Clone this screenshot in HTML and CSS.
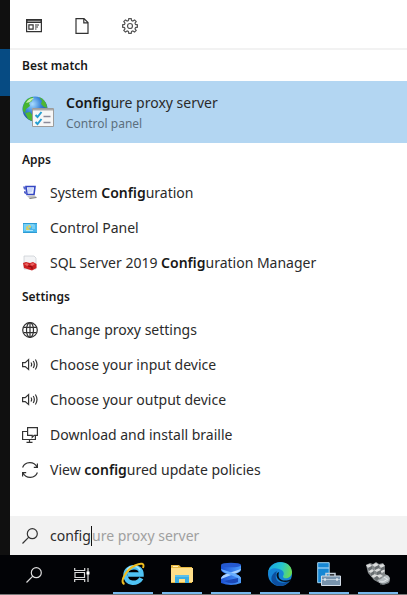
FILE: index.html
```html
<!DOCTYPE html>
<html lang="en">
<head>
<meta charset="utf-8">
<meta name="viewport" content="width=device-width, initial-scale=1">
<title>Search</title>
<link rel="stylesheet" href="styles.css">
</head>
<body>
<div class="screen">
  <div class="workspace">
    <div class="desktop-edge"><div class="edge-selection"></div></div>
    <main class="panel">
      <nav class="filters">
        <button class="filter" aria-label="Apps">
          <svg class="icon" viewBox="0 0 16 16"><path d="M.6 1.6h14.800v12H.6z" fill="none"/><path d="M1 2.200h14v2.200H1z" fill="#bbb"/><path d="M2.900 6.900h4.200v4.200H2.900zM9 7h4M9 9h3M9 11h1.500" fill="none"/></svg>
        </button>
        <button class="filter" aria-label="Documents">
          <svg class="icon" viewBox="0 0 16 16"><path d="M2 .6h8l4 4v10.800H2zM9.800.6v4.200H14" fill="none"/></svg>
        </button>
        <button class="filter" aria-label="Settings">
          <svg class="icon gear" viewBox="0 0 16 16"><path d="M6.800.6h2.400l.4 2 1.200.5 1.800-1.200 1.600 1.600L13 5.200l.5 1.200 1.900.4v2.400l-1.900.4-.5 1.200 1.200 1.700-1.600 1.600-1.800-1.200-1.200.5-.4 2H6.800l-.4-2-1.200-.5-1.800 1.200-1.600-1.600L3 10.800l-.5-1.200-1.900-.4V6.800l1.900-.4L3 5.200 1.800 3.500l1.600-1.600 1.800 1.200 1.200-.5z" fill="none"/><circle cx="8" cy="8" r="2.500" fill="none"/></svg>
        </button>
      </nav>

      <h2 class="heading heading-first">Best match</h2>
      <a class="best" href="#">
        <svg class="best-icon" viewBox="0 0 32 32">
          <defs><radialGradient id="globe" cx=".4" cy=".3" r=".75"><stop offset="0" stop-color="#a9dcff"/><stop offset=".45" stop-color="#3b86da"/><stop offset="1" stop-color="#123a91"/></radialGradient></defs>
          <circle cx="13" cy="13" r="12.500" fill="url(#globe)"/>
          <path d="M2 8C4 3 8 1 11 1l-1 4-3 2 1 3-4 3-1 4-2-2c-.5-3 0-5 1-7z" fill="#46b52f"/>
          <path d="M17 1c5 2 8 6 8 11l-3-1-3-3 1-3zM3 17l5-1 3 4-1 5-4-2z" fill="#4eb634"/>
          <path d="M4 7c2-4 5-5 8-5L8 6z" fill="#c8efab"/>
          <path d="M10.500 12.500h21v18h-21z" fill="#f7f7f7" stroke="#9c9c9c"/>
          <path d="M11 13h20v1.500H11z" fill="#aaa"/>
          <path d="M13.500 19l2 2 4-5M13.500 26l2 2 4-5" fill="none" stroke="#249ed2" stroke-width="2"/>
          <path d="M21.500 20.500h7M21.500 26.500h7" stroke="#8b8b9b" stroke-width="1.500"/>
        </svg>
        <span class="best-text"><span class="best-title"><b>Config</b>ure proxy server</span><span class="best-sub">Control panel</span></span>
      </a>

      <h2 class="heading">Apps</h2>
      <ul class="results">
        <li><a class="result" href="#">
          <svg class="icon art" viewBox="0 0 16 16"><path d="M4 1.500h9l-1 8H5z" fill="#eef3ff" stroke="#3547c4" stroke-width="1.600"/><path d="M6 3h5l-1 4-4 1z" fill="#cbd8fa"/><path d="M1 1.500h3v3H2zM2 6l3 1v3L2 8z" fill="#5564cb"/><path d="M5 11l7-1 2.500 2-7 1.500z" fill="#c3c3c3"/><path d="M7.500 13.500l7-1" stroke="#777"/></svg>
          <span>System <b>Config</b>uration</span></a></li>
        <li><a class="result" href="#">
          <svg class="icon art" viewBox="0 0 16 16"><path d="M1 3h14v10H1z" fill="#4ab8ec"/><path d="M1 3h14v1H1zM1 12h14v1H1z" fill="#2e9bd3"/><path d="M2 4h11L3 11H2z" fill="#79d0f5"/><path d="M4 8a2 2 0 012-2v2l2 1a2 2 0 01-4-1z" fill="#d9cd62"/><path d="M6.500 5A2.500 2.500 0 019 7.500H6.500z" fill="#f5d34b"/><path d="M10 6h3M10 8h3M4 10.500h7" stroke="#a8e4fa"/></svg>
          <span>Control Panel</span></a></li>
        <li><a class="result" href="#">
          <svg class="icon art" viewBox="0 0 16 16"><path d="M2 1h10l2 2v11H2z" fill="#f3f4f6" stroke="#ccd0d6" stroke-width=".8"/><path d="M1 8l3-1 4 1 3-1 3.500 2v4L10 15.500 2 13z" fill="#cc2023"/><path d="M2 9l3-1 2 2-2 1zM8 9l3-1 2 1-3 2z" fill="#ea6462"/><path d="M6 11l4 1v2" fill="none" stroke="#8c0d12"/></svg>
          <span>SQL Server 2019 <b>Config</b>uration Manager</span></a></li>
      </ul>

      <h2 class="heading">Settings</h2>
      <ul class="results">
        <li><a class="result" href="#">
          <svg class="icon" viewBox="0 0 16 16"><g fill="none"><circle cx="8" cy="8" r="7.300"/><ellipse cx="8" cy="8" rx="3.500" ry="7.300"/><path d="M1.500 5.300h13M1.500 10.700h13M8 .7v14.600"/></g></svg>
          <span>Change proxy settings</span></a></li>
        <li><a class="result" href="#">
          <svg class="icon" viewBox="0 0 16 16"><path d="M.6 5.600h2.600L6.600 2.500v10L3.200 9.600H.6zM9 5.500q1.300 2 0 4M11.200 4q2.300 3.500 0 7M13.400 2.500q3.200 5 0 10" fill="none"/></svg>
          <span>Choose your input device</span></a></li>
        <li><a class="result" href="#">
          <svg class="icon" viewBox="0 0 16 16"><path d="M.6 5.600h2.600L6.600 2.500v10L3.200 9.600H.6zM9 5.500q1.300 2 0 4M11.200 4q2.300 3.500 0 7M13.400 2.500q3.200 5 0 10" fill="none"/></svg>
          <span>Choose your output device</span></a></li>
        <li><a class="result" href="#">
          <svg class="icon" viewBox="0 0 16 16"><path d="M5.600.7h9.800v7.600h-3.200l-2 2V8.300H5.600zM5.600 4.500H.6v8h12.800V8.500M7.500 12.500v2.800M4.500 15.300h6" fill="none"/></svg>
          <span>Download and install braille</span></a></li>
        <li><a class="result" href="#">
          <svg class="icon" viewBox="0 0 16 16"><path d="M.6 5.500C3-.8 12-1 15 5M15.400 1.500v3.800h-3.600M15.400 10.500C13 16.800 4 17 1 11M.6 14.500v-3.800h3.600" fill="none"/></svg>
          <span>View <b>config</b>ured update policies</span></a></li>
      </ul>

      <div class="search">
        <svg class="icon" viewBox="0 0 16 16"><circle cx="10.300" cy="5.700" r="5" fill="none"/><path d="M6.800 9.200L.5 15.500"/></svg>
        <div class="field">
          <input class="query" type="text" value="config" aria-label="Search">
          <span class="caret"></span>
          <span class="ghost">ure proxy server</span>
        </div>
      </div>
    </main>
  </div>

  <footer class="taskbar">
    <button class="tool" aria-label="Search">
      <svg class="icon light" viewBox="0 0 16 16"><circle cx="10.300" cy="5.700" r="5" fill="none"/><path d="M6.800 9.200L.5 15.500"/></svg>
    </button>
    <button class="tool" aria-label="Task View">
      <svg class="icon light" viewBox="0 0 16 16"><path d="M.7 1v2.500h10V1M1 5.500h9.500v5H1zM.7 15v-2.500h10V15M14 1v14" fill="none"/><path d="M12.500 4.500h3v3h-3z" fill="#fff" stroke="none"/></svg>
    </button>
    <div class="running">
      <button class="app" aria-label="Internet Explorer">
        <svg class="app-icon" viewBox="0 0 24 24"><path d="M20.300 16.200C17 22.500 5 23 4.500 13 4.500 3.500 20.500 2 20.500 12.500H7" fill="none" stroke="#4fc3f3" stroke-width="4.500"/><path d="M6 8C9 3 16 3 19 8" fill="none" stroke="#a9eaff" stroke-width="1.500"/><path d="M3.500 22C-2 20 5 8 14 3.500 20 .5 24 1 22 6" fill="none" stroke="#efbd20" stroke-width="2"/></svg>
      </button>
      <button class="app" aria-label="File Explorer">
        <svg class="app-icon" viewBox="0 0 24 24"><path d="M1 3h8l2 2h11v16H1z" fill="#e8b942"/><path d="M1 6h22v14H1z" fill="#ffe08a"/><path d="M3 4.500h5" stroke="#fff0bd"/><path d="M5 21v-8h14v8h-4v-4H9v4z" fill="#39aee4"/><path d="M5 13h14v2H5z" fill="#5abfea"/></svg>
      </button>
      <button class="app" aria-label="Azure Data Studio">
        <svg class="app-icon" viewBox="0 0 24 24"><defs><linearGradient id="ribbon"><stop offset="0" stop-color="#1c51d2"/><stop offset="1" stop-color="#4c9dfc"/></linearGradient></defs><path d="M2 3q10 4 20 0v5q-1 3-7 4 6 1 7 4v5q-10 4-20 0v-5q1-3 7-4-6-1-7-4z" fill="url(#ribbon)"/><ellipse cx="12" cy="3" rx="10" ry="2.300" fill="#2559cf"/><path d="M22 7q-1 3-7 5L2 17q0-3 5-5z" fill="#a9d2ff"/><path d="M2 7q1 3 7 5l13 5q0-3-5-5z" fill="#67aeff"/><path d="M5 19l14-3v4q-7 3-14-1z" fill="#1b48b8"/></svg>
      </button>
      <button class="app" aria-label="Microsoft Edge">
        <svg class="app-icon" viewBox="0 0 24 24"><defs><linearGradient id="wave" x1="0" y1=".3" x2="1" y2=".5"><stop offset="0" stop-color="#18a5e2"/><stop offset=".55" stop-color="#27c6cb"/><stop offset="1" stop-color="#6ddb50"/></linearGradient></defs><circle cx="12" cy="12" r="12" fill="#1685d7"/><path d="M0 11C1-2 23-4 24 10c0 7-10 8-9 4 2-3 0-6-4-7C6 5 1 7 0 11z" fill="url(#wave)"/><path d="M8 12c-2 9 8 11 14 6-4 7-13 8-17 3C2 17 3 12 9 9z" fill="#0d4f9f"/><path d="M11 10c-2 7 3 10 10 8l2-1-1 2c-4 2-10 1-12-2s-2-6 1-7z" fill="#05101d"/></svg>
      </button>
      <button class="app" aria-label="Server Manager">
        <svg class="app-icon" viewBox="0 0 24 24"><path d="M.7.7h11.500v20H.7z" fill="#1687d4" stroke="#a3d6f3"/><path d="M1 6h11" stroke="#c2e7ff"/><path d="M9 14v-2.500h9V14" fill="none" stroke="#c5d1dc" stroke-width="1.500"/><path d="M4.500 14h19v9.500h-19z" fill="#7894ad" stroke="#d2dce6"/><path d="M5 17.500h18" stroke="#b9cbd9"/><path d="M8 16v3M20 16v3" stroke="#fff"/></svg>
      </button>
      <button class="app" aria-label="Configuration Tools">
        <svg class="app-icon" viewBox="0 0 24 24"><path d="M0 3l4-2 3 1 3-2 3 2 4-1 2 3v8l4 2 1 4-1 3-6 2-9-5-6-7z" fill="#858a8c"/><path d="M0 3l4-1 2 2-4 2zM6 3l4-2 3 2-4 2zM13 3l4-1 2 2-4 2zM2 9l4-2 2 2-3 2zM8 8l4-2 3 2-4 2zM14 9l3-2 2 2-3 2zM5 14l4-2 2 2-3 2zM10 13l4-1 3 2-4 2z" fill="#dcdddd"/><path d="M2 6l4-2v3L3 9zM9 5l4-2v3l-4 2zM15 6l4-2v3l-4 2zM5 11l3-2v3l-3 2zM11 10l4-2v4l-4 1zM8 16l3-2 2 2-2 3z" fill="#686d70"/><path d="M11 18q4 0 6-3l4-2 3 3-2 4-5 2z" fill="#b8bfc2"/><path d="M13 20q4 1 9-3M18 15l3 2" fill="none" stroke="#e5e9eb"/><path d="M14 22q5 1 9-2" fill="none" stroke="#697276"/></svg>
      </button>
    </div>
  </footer>
</div>
</body>
</html>
```
FILE: styles.css
```css
* { box-sizing: border-box; }

body {
  margin: 0;
  background: #fff;
  color: #2b2b2b;
  font-family: "Segoe UI", "Noto Sans", "Open Sans", sans-serif;
  font-size: 14px;
  line-height: 20px;
}

button, input { font: inherit; color: inherit; }

button {
  display: grid;
  place-items: center;
  border: 0;
  padding: 0;
  background: transparent;
}

a { color: inherit; text-decoration: none; }
b { font-weight: 600; color: #181818; }

.screen {
  display: flex;
  flex-direction: column;
  min-height: 100vh;
}

.workspace { display: flex; flex: 1; }

.desktop-edge {
  width: 10px;
  padding-top: 49px;
  background: #101010;
}

.edge-selection { height: 47px; background: #064b83; }

.panel {
  display: flex;
  flex: 1;
  flex-direction: column;
  min-width: 0;
}

.icon {
  flex: none;
  width: 16px;
  height: 16px;
  stroke: #333;
  stroke-width: 1.2;
}

.art { stroke: none; }
.gear { stroke: #555; }
.light { stroke: #ddd; }

.filters {
  display: flex;
  height: 50px;
  border-bottom: 2px solid #f2f2f2;
}

.filter { width: 48px; padding-top: 4px; }

.heading {
  margin: 0;
  padding: 7px 12px 5px;
  color: #181818;
  font-size: 12px;
  font-weight: 600;
  line-height: 20px;
}

.heading-first { padding: 6px 12px 5px; }

.best {
  display: flex;
  align-items: center;
  gap: 12px;
  height: 62px;
  padding: 0 12px;
  background: #b3d6f2;
}

.best-icon { width: 32px; height: 32px; }
.best-text { display: flex; flex-direction: column; gap: 1px; padding-top: 2px; }
.best-sub { color: #5c6f7e; font-size: 12px; }

.results { margin: 0; padding: 0; list-style: none; }

.result {
  display: flex;
  align-items: center;
  gap: 12px;
  height: 35px;
  padding: 0 12px;
  white-space: nowrap;
}

.search {
  display: flex;
  align-items: center;
  gap: 12px;
  height: 39px;
  margin-top: auto;
  padding: 0 12px;
  background: #f2f2f2;
}

.field { display: flex; align-items: center; flex: 1; }

.query {
  width: 41px;
  border: 0;
  padding: 0;
  background: transparent;
  outline: 0;
}

.caret { width: 1px; height: 20px; background: #111; }
.ghost { color: #a0a0a0; }

.taskbar {
  display: flex;
  height: 40px;
  padding-left: 10px;
  border-bottom: 1px solid #777;
  background: #020306;
}

.tool { width: 48px; }

.running { display: flex; gap: 9px; margin-left: 7px; }

.app {
  width: 40px;
  border-bottom: 2px solid #76b9ed;
}

.app-icon { width: 24px; height: 24px; }
```
